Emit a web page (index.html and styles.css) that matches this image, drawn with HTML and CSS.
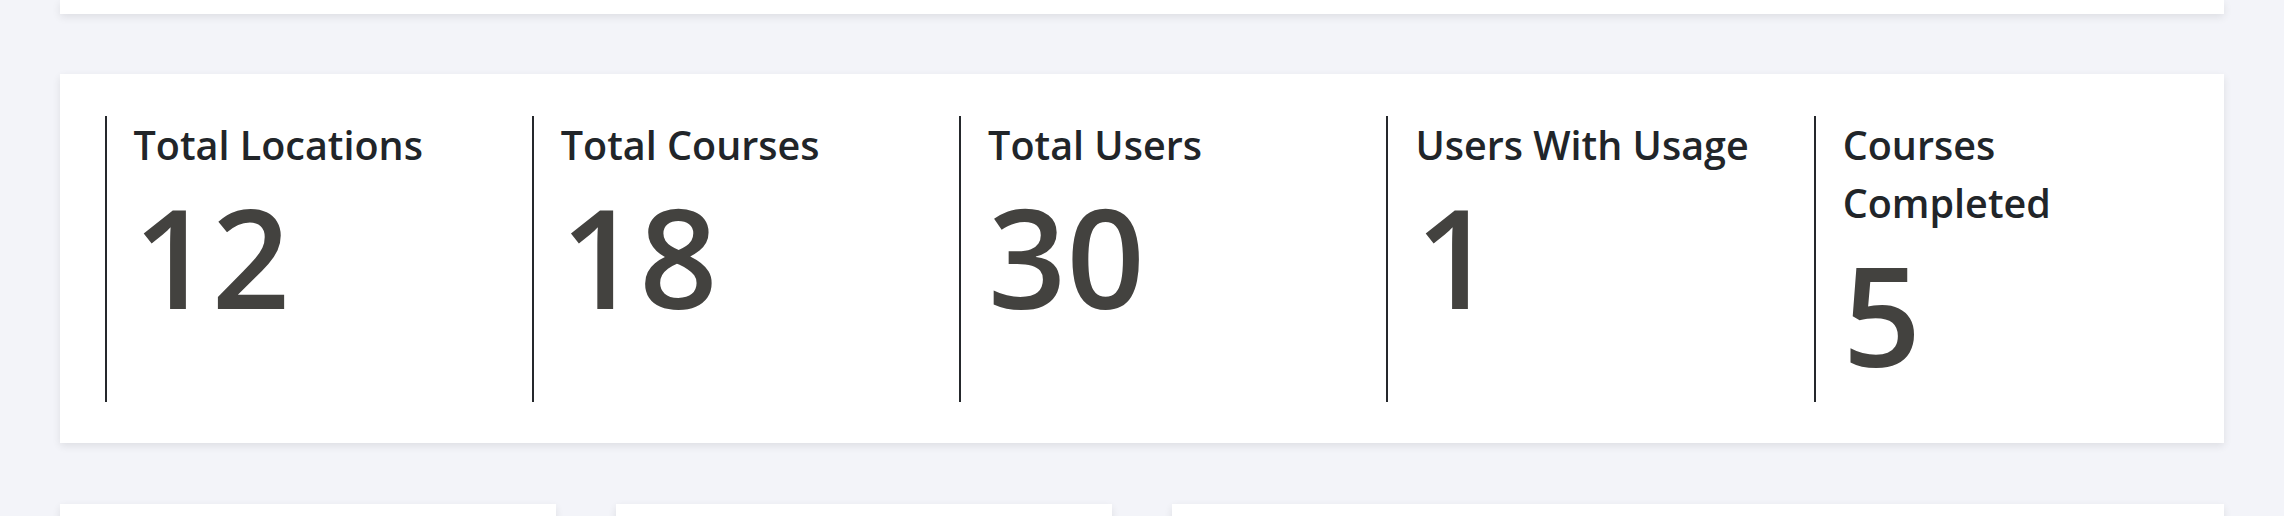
FILE: index.html
```html
<!DOCTYPE html>
<html lang="en">
<head>
    <meta charset="UTF-8">
    <meta name="viewport" content="width=device-width, initial-scale=1.0">
    <title>Dashboard - Overview</title>
    <link rel="stylesheet" href="styles.css">
</head>
<body>
    <div class="page">
        <div class="card top-card"></div>

        <div class="card stats-card">
            <div class="stat">
                <div class="stat-label">Total Locations</div>
                <div class="stat-value">12</div>
            </div>
            <div class="stat">
                <div class="stat-label">Total Courses</div>
                <div class="stat-value">18</div>
            </div>
            <div class="stat">
                <div class="stat-label">Total Users</div>
                <div class="stat-value">30</div>
            </div>
            <div class="stat">
                <div class="stat-label">Users With Usage</div>
                <div class="stat-value">1</div>
            </div>
            <div class="stat">
                <div class="stat-label">Courses Completed</div>
                <div class="stat-value">5</div>
            </div>
        </div>

        <div class="panel-row">
            <div class="card panel"></div>
            <div class="card panel"></div>
            <div class="card panel panel-wide"></div>
        </div>
    </div>
</body>
</html>
```

FILE: styles.css
```css
body {
    margin: 0;
    padding: 0;
    background: #f3f4f9;
    font-family: 'Open Sans', 'Noto Sans', sans-serif;
    color: #212529;
    overflow: hidden;
}

.page {
    padding: 0 60px;
}

.card {
    background: #ffffff;
    box-shadow: 0 3px 8px rgba(0, 0, 0, 0.09);
}

.top-card {
    height: 14px;
    margin-bottom: 60px;
}

.stats-card {
    display: grid;
    grid-template-columns: repeat(5, 427.3px);
    padding: 42px 0 41px 44.5px;
    margin-bottom: 61px;
}

.stat {
    border-left: 2px solid #25282c;
    padding: 0 40px 6px 27px;
    min-height: 280px;
}

.stat-label {
    font-size: 39.5px;
    font-weight: 600;
    line-height: 58px;
    color: #212529;
}

.stat-value {
    font-size: 137px;
    font-weight: 600;
    line-height: 164px;
    color: #43423f;
}

.panel-row {
    display: grid;
    grid-template-columns: repeat(4, 1fr);
    gap: 60px;
}

.panel {
    height: 240px;
}

.panel-wide {
    grid-column: span 2;
}
```
